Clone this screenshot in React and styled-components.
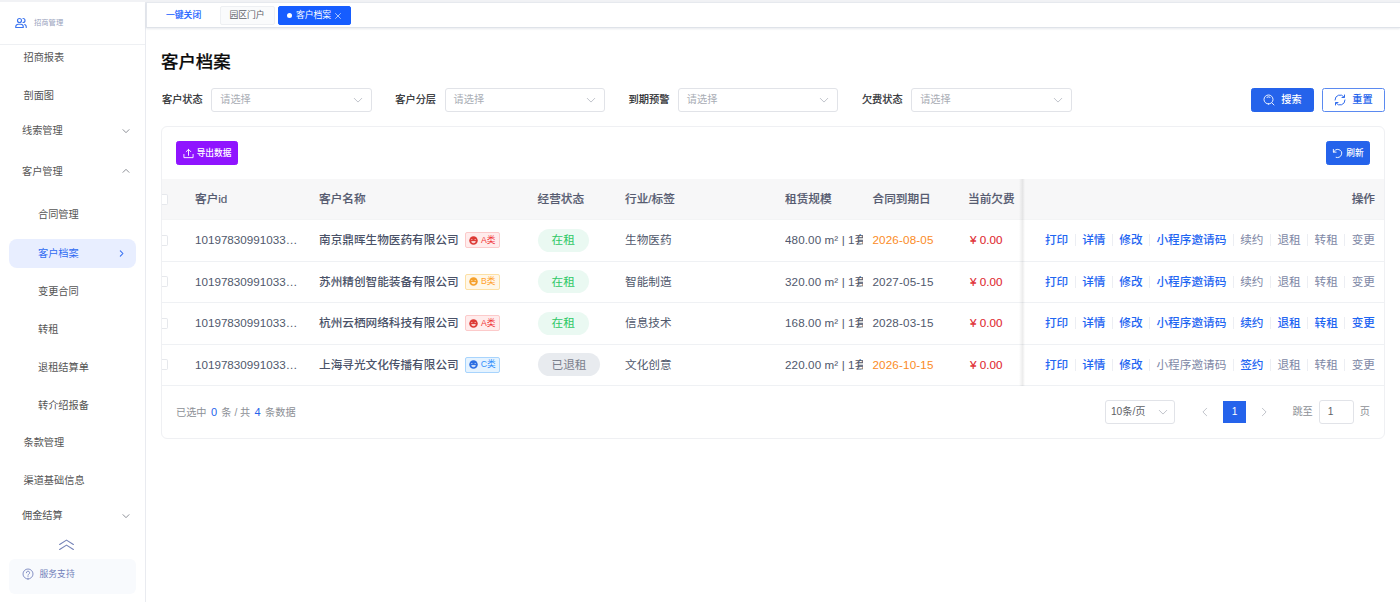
import styled, { createGlobalStyle, css } from "styled-components";

const GlobalStyle = createGlobalStyle`
  * {
    box-sizing: border-box;
  }
  body {
    margin: 0;
    background: #fff;
    font-family: "Liberation Sans", "Noto Sans CJK SC", sans-serif;
    font-size: 10.2px;
    line-height: 1;
    color: #303133;
    overflow: hidden;
  }
`;

const Page = styled.div`
  display: flex;
  height: 602px;
  border-top: 2px solid #f1f2f5;
`;

/* sidebar */

const Sidebar = styled.aside`
  width: 146px;
  flex-shrink: 0;
  display: flex;
  flex-direction: column;
  border-right: 1px solid #e9ebf0;
`;

const Brand = styled.div`
  height: 43px;
  flex-shrink: 0;
  display: flex;
  align-items: center;
  gap: 7px;
  padding-left: 15px;
  border-bottom: 1px solid #eef0f3;
  font-size: 7.3px;
  color: #99a3bd;
`;

const Menu = styled.nav`
  height: 490px;
  flex-shrink: 0;
  overflow: hidden;
`;

const MenuList = styled.div`
  margin-top: -7px;
`;

const MenuItem = styled.div`
  height: ${(props) => props.$height || 38}px;
  padding: 2px 15px 0 ${(props) => props.$indent || 23.5}px;
  display: flex;
  align-items: center;
  justify-content: space-between;
  color: #545454;

  svg {
    margin-bottom: 2px;
  }
`;

const ActiveItem = styled.div`
  height: 29px;
  margin: 5px 9px 4px;
  padding: 1px 11px 0 29px;
  border-radius: 8px;
  background: #e8eeff;
  display: flex;
  align-items: center;
  justify-content: space-between;
  color: #2f6bf2;

  svg {
    margin-bottom: 2px;
  }
`;

const Collapse = styled.div`
  height: 24px;
  flex-shrink: 0;
  padding: 0 12px 5px 0;
  display: flex;
  align-items: center;
  justify-content: center;
`;

const Support = styled.div`
  height: 35px;
  margin: 0 9px;
  padding: 0 0 5px 13px;
  border-radius: 6px;
  background: #f8fafd;
  display: flex;
  align-items: center;
  gap: 5.5px;
  font-size: 8.8px;
  color: #7180ba;
`;

/* right side */

const Main = styled.main`
  flex: 1;
  min-width: 0;
`;

const TabBar = styled.div`
  height: 26px;
  padding: 0 0 0 19px;
  display: flex;
  align-items: center;
  border-left: 1px solid #e3e6ec;
  border-top: 1px solid #e6e9ee;
  border-bottom: 1px solid #dfe3e9;
  box-shadow: 0 1px 2px rgba(30, 50, 90, 0.1);
  font-size: 8.8px;
`;

const CloseAll = styled.span`
  color: #165dff;
  -webkit-text-stroke: 0.2px;
  width: 54px;
`;

const Tab = styled.div`
  height: 19px;
  width: ${(props) => props.$width}px;
  margin-right: 3px;
  padding-right: 1px;
  display: flex;
  align-items: center;
  justify-content: center;
  gap: 4px;
  border-radius: 2px;
  border: 1px solid ${(props) => (props.$active ? "#165dff" : "#eef0f3")};
  background: ${(props) => (props.$active ? "#165dff" : "#fafbfc")};
  color: ${(props) => (props.$active ? "#fff" : "#5c6068")};

  svg {
    margin-top: 1px;
  }
`;

const Dot = styled.i`
  width: 5px;
  height: 5px;
  margin-top: 1px;
  border-radius: 50%;
  background: #fff;
`;

const Content = styled.div`
  padding: 22px 15px 0;
`;

const Title = styled.h1`
  margin: 0;
  height: 24px;
  line-height: 24px;
  font-size: 17.4px;
  font-weight: 500;
  color: #0b0b0b;
  -webkit-text-stroke: 0.2px;
`;

const Filters = styled.div`
  margin-top: 14px;
  height: 24px;
  display: flex;
  align-items: center;
`;

const Field = styled.label`
  width: 233.3px;
  display: flex;
  align-items: center;
  gap: 8.5px;
  padding-left: 1px;
  color: #26282c;
  -webkit-text-stroke: 0.2px;
`;

const Select = styled.span`
  width: 160.5px;
  height: 24px;
  padding: 0 8px;
  display: flex;
  align-items: center;
  justify-content: space-between;
  border: 1px solid #e1e3e8;
  border-radius: 3px;
  color: #a9adb5;
  -webkit-text-stroke: 0;
`;

const FilterButtons = styled.div`
  margin-left: auto;
  display: flex;
  gap: 8px;
`;

const Button = styled.button`
  width: ${(props) => props.$width || 63}px;
  height: 24px;
  padding: 0;
  display: flex;
  align-items: center;
  justify-content: center;
  gap: ${(props) => (props.$small ? 3 : 6)}px;
  border: 1px solid ${(props) => props.$bg || "#2563eb"};
  border-radius: 2.5px;
  background: ${(props) => props.$bg || "#2563eb"};
  color: #fff;
  font-family: inherit;
  font-size: ${(props) => (props.$small ? 8.7 : 10.2)}px;
  line-height: 1;
  font-weight: 500;
  ${(props) =>
    props.$plain &&
    css`
      background: #fff;
      color: #2563eb;
      border-color: #5b8af0;
    `}
`;

const Card = styled.section`
  margin-top: 14px;
  height: 313px;
  border: 1px solid #eff0f3;
  border-radius: 6px;
`;

const Toolbar = styled.div`
  height: 52px;
  padding: 0 14px;
  display: flex;
  align-items: center;
  justify-content: space-between;
`;

const Table = styled.div`
  font-size: 11.65px;
  color: #50586c;
  overflow: hidden;
`;

const Row = styled.div`
  height: ${(props) => (props.$head ? 41 : 41.5)}px;
  display: grid;
  grid-template-columns: 33px 124px 218.5px 87.5px 160px 87.5px 95.5px 55px 1fr;
  align-items: center;
  white-space: nowrap;
  border-bottom: 1px solid #eff1f4;
  ${(props) =>
    props.$head &&
    css`
      background: #f7f7f8;
      border-color: #f3f4f5;
      font-weight: 500;
      color: #565b70;
      -webkit-text-stroke: 0.15px;
    `}
`;

const Check = styled.i`
  width: 6px;
  height: 11px;
  border: 1px solid #e6e8ec;
  border-left: none;
  border-radius: 0 2px 2px 0;
  background: #fff;
`;

const Name = styled.div`
  display: flex;
  align-items: center;
  gap: 6px;
  font-weight: 500;
  color: #4a5268;
`;

const gradeColors = {
  A: { color: "#f0383b", face: "#dd3a35", bg: "#ffecec", border: "#fccaca" },
  B: { color: "#ffa12e", face: "#f5a02b", bg: "#fff7e8", border: "#fde0a4" },
  C: { color: "#3390fb", face: "#2b6fe3", bg: "#e5f3ff", border: "#a8d4fd" },
};

const Grade = styled.span`
  width: 35px;
  height: 16px;
  display: flex;
  align-items: center;
  justify-content: center;
  gap: 3px;
  border: 1px solid ${(props) => gradeColors[props.$grade].border};
  border-radius: 2px;
  background: ${(props) => gradeColors[props.$grade].bg};
  color: ${(props) => gradeColors[props.$grade].color};
  font-size: 8.7px;
  font-weight: 400;
`;

const Status = styled.span`
  height: 23px;
  padding: 0 14px;
  display: inline-flex;
  align-items: center;
  vertical-align: middle;
  border-radius: 12px;
  background: ${(props) => (props.$left ? "#e8ebef" : "#eaf9f2")};
  color: ${(props) => (props.$left ? "#7c818d" : "#2fc866")};
`;

const Clip = styled.div`
  width: 78px;
  line-height: 16px;
  letter-spacing: 0.1px;
  overflow: hidden;
`;

const DateText = styled.span`
  letter-spacing: 0.15px;
  color: ${(props) => (props.$warn ? "#fb8b1e" : "inherit")};
`;

const Money = styled.span`
  padding-left: 2px;
  color: #e0282e;
  -webkit-text-stroke: 0.1px;
`;

const Fixed = styled.div`
  position: relative;
  height: 100%;
  padding-right: 9px;
  display: flex;
  align-items: center;
  justify-content: flex-end;

  &::before {
    content: "";
    position: absolute;
    top: 0;
    bottom: -1px;
    left: -4px;
    width: 6px;
    background: linear-gradient(90deg, transparent, rgba(0, 0, 0, 0.075) 60%, transparent);
  }
`;

const Action = styled.a`
  color: ${(props) => (props.$off ? "#8088a6" : "#1f66f2")};
  font-weight: ${(props) => (props.$off ? 400 : 500)};
  line-height: 12px;

  & + & {
    margin-left: 6.5px;
    padding-left: 6.4px;
    border-left: 1px solid #eceef3;
  }
`;

const Footer = styled.div`
  height: 52px;
  padding: 0 14px;
  display: flex;
  align-items: center;
  color: #8d9096;
`;

const Summary = styled.div`
  flex: 1;
  padding-top: 1px;

  b {
    margin: 0 1.5px;
    font-size: 11px;
    font-weight: 500;
    color: #2563eb;
  }
`;

const PageSize = styled(Select)`
  width: 70.5px;
  padding: 0 6px 0 5px;
  color: #606266;
`;

const Arrow = styled.span`
  width: ${(props) => props.$width}px;
  padding-left: ${(props) => props.$shift || 0}px;
  display: flex;
  justify-content: center;
`;

const Current = styled.span`
  width: 22.5px;
  height: 22.5px;
  display: flex;
  align-items: center;
  justify-content: center;
  background: #2563eb;
  color: #fff;
`;

const Jump = styled.span`
  margin-left: 10.5px;
  display: flex;
  align-items: center;
  gap: 6px;
`;

const PageInput = styled.span`
  width: 35px;
  height: 24px;
  padding-left: 8px;
  line-height: 22px;
  border: 1px solid #e1e3e8;
  border-radius: 3px;
  color: #606266;
`;

/* icons */

const Stroke = ({ size = 10, box = 24, color = "currentColor", width = 2, d }) => (
  <svg
    width={size}
    height={size}
    viewBox={`0 0 ${box} ${box}`}
    fill="none"
    stroke={color}
    strokeWidth={width}
    strokeLinecap="round"
    strokeLinejoin="round"
  >
    <path d={d} />
  </svg>
);

const Chevron = ({ dir = "down", color = "#b4b8c0", size = 10, width = 2 }) => {
  const paths = {
    down: "M3 8l9 9 9-9",
    up: "M3 16l9-9 9 9",
    left: "M16 3l-9 9 9 9",
    right: "M8 3l9 9-9 9",
  };
  return <Stroke d={paths[dir]} color={color} size={size} width={width} />;
};

const UsersIcon = () => (
  <Stroke
    size={12}
    color="#3b74f0"
    width={2.3}
    d="M9 11a4 4 0 1 0 0-8 4 4 0 0 0 0 8zM1.500 21v-1.500a5 5 0 0 1 5-5h5a5 5 0 0 1 5 5V21zM16 3a4 4 0 0 1 0 8M19.500 15a5 5 0 0 1 3 4.500V21"
  />
);

const UploadIcon = () => (
  <Stroke size={11} d="M12 16V3M7 8l5-5 5 5M2 14v7h20v-7" />
);

const SearchIcon = () => (
  <Stroke
    size={12}
    width={1.8}
    d="M11 20a9 9 0 1 0 0-18 9 9 0 0 0 0 18zM18 18l4 4M8 6.500a5.500 5.500 0 0 1 6 0"
  />
);

const ResetIcon = () => (
  <Stroke
    size={12}
    width={1.9}
    d="M2 12A10 10 0 0 1 20 6M21 2v5h-5M22 12A10 10 0 0 1 4 18M3 22v-5h5"
  />
);

const RefreshIcon = () => (
  <Stroke size={11} d="M3 3v6h6M3.500 9A9 9 0 1 1 9 20.500" />
);

const HelpIcon = () => (
  <Stroke
    size={12}
    width={1.7}
    d="M12 22a10 10 0 1 0 0-20 10 10 0 0 0 0 20zM8.800 9.500a3.200 3.200 0 1 1 4.600 2.900c-1 .5-1.400 1-1.400 2.100M12 17.300v.3"
  />
);

const FaceIcon = ({ color }) => (
  <svg width="9" height="9" viewBox="0 0 18 18">
    <circle cx="9" cy="9" r="8.500" fill={color} />
    <path d="M4 7h3M11 7h3" stroke="#fff" strokeOpacity=".6" strokeWidth="1.600" />
    <path d="M4.500 10h9a4.500 4.500 0 0 1-9 0z" fill="#fff" fillOpacity=".75" />
  </svg>
);

const menu = [
  { label: "招商报表" },
  { label: "剖面图" },
  { label: "线索管理", arrow: "down", height: 33, indent: 22 },
  { label: "客户管理", arrow: "up", height: 48, indent: 22 },
  { label: "合同管理", indent: 38, height: 39 },
  { label: "客户档案", active: true },
  { label: "变更合同", indent: 38 },
  { label: "转租", indent: 38 },
  { label: "退租结算单", indent: 38 },
  { label: "转介绍报备", indent: 38 },
  { label: "条款管理", height: 37 },
  { label: "渠道基础信息" },
  { label: "佣金结算", arrow: "down", height: 33, indent: 22 },
];

const filters = ["客户状态", "客户分层", "到期预警", "欠费状态"];

const customers = [
  { name: "南京鼎晖生物医药有限公司", grade: "A", industry: "生物医药", area: "480.00", date: "2026-08-05", warn: true, off: [4, 5, 6, 7] },
  { name: "苏州精创智能装备有限公司", grade: "B", industry: "智能制造", area: "320.00", date: "2027-05-15", off: [4, 5, 6, 7] },
  { name: "杭州云栖网络科技有限公司", grade: "A", industry: "信息技术", area: "168.00", date: "2028-03-15", off: [] },
  { name: "上海寻光文化传播有限公司", grade: "C", industry: "文化创意", area: "220.00", date: "2026-10-15", warn: true, left: true, off: [3, 5, 6, 7] },
];

const getActions = (left) => [
  "打印",
  "详情",
  "修改",
  "小程序邀请码",
  left ? "签约" : "续约",
  "退租",
  "转租",
  "变更",
];

const CustomerRow = ({ item }) => (
  <Row>
    <Check />
    <span>10197830991033…</span>
    <Name>
      {item.name}
      <Grade $grade={item.grade}>
        <FaceIcon color={gradeColors[item.grade].face} />
        {item.grade}类
      </Grade>
    </Name>
    <div>
      <Status $left={item.left}>{item.left ? "已退租" : "在租"}</Status>
    </div>
    <span>{item.industry}</span>
    <Clip>{item.area} m² | 1套</Clip>
    <DateText $warn={item.warn}>{item.date}</DateText>
    <Money>¥ 0.00</Money>
    <Fixed>
      {getActions(item.left).map((action, i) => (
        <Action key={action} $off={item.off.includes(i)}>
          {action}
        </Action>
      ))}
    </Fixed>
  </Row>
);

const App = () => {
  return (
    <Page>
      <GlobalStyle />
      <Sidebar>
        <Brand>
          <UsersIcon />
          招商管理
        </Brand>
        <Menu>
          <MenuList>
            {menu.map((item) =>
              item.active ? (
                <ActiveItem key={item.label}>
                  {item.label}
                  <Chevron dir="right" size={7} color="#2f6bf2" width={3.5} />
                </ActiveItem>
              ) : (
                <MenuItem key={item.label} $height={item.height} $indent={item.indent}>
                  {item.label}
                  {item.arrow && <Chevron dir={item.arrow} size={8} color="#70747c" width={2.4} />}
                </MenuItem>
              )
            )}
          </MenuList>
        </Menu>
        <Collapse>
          <Stroke size={15} width={1.8} color="#7583b8" d="M1 12L12 5l11 7M1 20l11-7 11 7" />
        </Collapse>
        <Support>
          <HelpIcon />
          服务支持
        </Support>
      </Sidebar>
      <Main>
        <TabBar>
          <CloseAll>一键关闭</CloseAll>
          <Tab $width={55}>园区门户</Tab>
          <Tab $width={73} $active>
            <Dot />
            客户档案
            <Stroke size={6} width={2.5} d="M2 2l20 20M22 2L2 22" />
          </Tab>
        </TabBar>
        <Content>
          <Title>客户档案</Title>
          <Filters>
            {filters.map((label) => (
              <Field key={label}>
                {label}
                <Select>
                  请选择
                  <Chevron />
                </Select>
              </Field>
            ))}
            <FilterButtons>
              <Button>
                <SearchIcon />
                搜索
              </Button>
              <Button $plain>
                <ResetIcon />
                重置
              </Button>
            </FilterButtons>
          </Filters>
          <Card>
            <Toolbar>
              <Button $small $width={62} $bg="#8f14ff">
                <UploadIcon />
                导出数据
              </Button>
              <Button $small $width={44}>
                <RefreshIcon />
                刷新
              </Button>
            </Toolbar>
            <Table>
              <Row $head>
                <Check />
                <span>客户id</span>
                <span>客户名称</span>
                <span>经营状态</span>
                <span>行业/标签</span>
                <span>租赁规模</span>
                <span>合同到期日</span>
                <span>当前欠费</span>
                <Fixed>操作</Fixed>
              </Row>
              {customers.map((item) => (
                <CustomerRow key={item.name} item={item} />
              ))}
            </Table>
            <Footer>
              <Summary>
                已选中 <b>0</b> 条 / 共 <b>4</b> 条数据
              </Summary>
              <PageSize>
                10条/页
                <Chevron />
              </PageSize>
              <Arrow $width={48} $shift={11}>
                <Chevron dir="left" />
              </Arrow>
              <Current>1</Current>
              <Arrow $width={36} $shift={1}>
                <Chevron dir="right" />
              </Arrow>
              <Jump>
                跳至
                <PageInput>1</PageInput>
                页
              </Jump>
            </Footer>
          </Card>
        </Content>
      </Main>
    </Page>
  );
};

export default App;
